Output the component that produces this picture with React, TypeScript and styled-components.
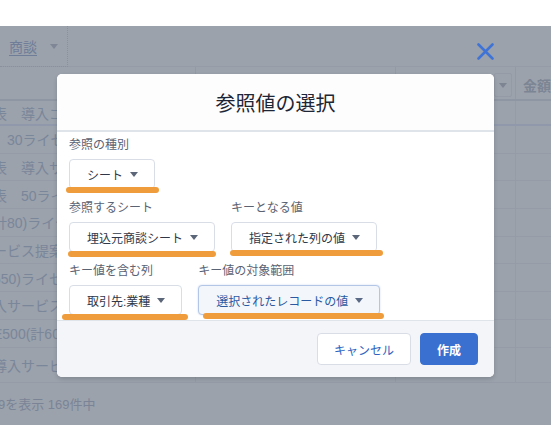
import styled, { createGlobalStyle } from "styled-components";

const GlobalStyle = createGlobalStyle`
  html, body {
    margin: 0;
    padding: 0;
    background: #ffffff;
  }
  body {
    font-family: "Liberation Sans", "Noto Sans CJK JP", sans-serif;
  }
`;

const rows = [
  "表　導入コンサルティング",
  "　30ライセンス",
  "表　導入サービス",
  "表　50ライセンス",
  "計80)ライセンス",
  "ービス提案",
  "550)ライセンス",
  "入サービス",
  "E500(計60)",
  "導入サービス",
];

const fields = [
  [{ label: "参照の種別", value: "シート", mark: { l: -3, r: -4, b: -4 } }],
  [
    { label: "参照するシート", value: "埋込元商談シート", mark: { l: -1, r: -1, b: -5 } },
    { label: "キーとなる値", value: "指定された列の値", mark: { l: -1, r: -6, b: -4 } },
  ],
  [
    { label: "キー値を含む列", value: "取引先:業種", mark: { l: -7, r: -6, b: -5 } },
    {
      label: "キー値の対象範囲",
      value: "選択されたレコードの値",
      focused: true,
      mark: { l: 5, r: -4, b: -4 },
    },
  ],
];

const App = () => {
  return (
    <>
      <GlobalStyle />
      <Page>
        <TopStrip />
        <Screen>
          <Toolbar>
            <TabItem>
              <TabLink>商談</TabLink>
              <Caret $color="#7f8796" />
            </TabItem>
          </Toolbar>
          <HeaderRow>
            <HeadCell $w={196} />
            <HeadCell $w={200} />
            <HeadCell $w={120}>
              <SortBox>
                <Caret $color="#7d8593" />
              </SortBox>
            </HeadCell>
            <HeadCell $w={60}>
              <HeadText>金額</HeadText>
            </HeadCell>
          </HeaderRow>
          <TableBody>
            {rows.map((text, i) => (
              <BodyRow key={i} $first={i === 0} $last={i === rows.length - 1}>
                <BodyCell $w={196}>
                  <RowText>{text}</RowText>
                </BodyCell>
                <BodyCell $w={200} />
                <BodyCell $w={120} />
                <BodyCell $w={60} />
              </BodyRow>
            ))}
          </TableBody>
          <TableFooter>
            <FooterText>9を表示 169件中</FooterText>
          </TableFooter>

          <Overlay>
            <CloseButton aria-label="閉じる">
              <svg width="17" height="17" viewBox="0 0 17 17">
                <path
                  d="M1.5 1.5 L15.5 15.5 M15.5 1.5 L1.5 15.5"
                  stroke="#3f74d6"
                  strokeWidth="2.6"
                  strokeLinecap="round"
                  fill="none"
                />
              </svg>
            </CloseButton>
            <Modal>
              <ModalHeader>
                <Title>参照値の選択</Title>
              </ModalHeader>
              <ModalBody>
                {fields.map((row, i) => (
                  <FieldRow key={i}>
                    {row.map((f) => (
                      <Field key={f.label}>
                        <Label>{f.label}</Label>
                        <SelectWrap>
                          <Select $focused={f.focused}>
                            {f.value}
                            <Caret $color={f.focused ? "#5a6a86" : "#5c6679"} />
                          </Select>
                          <Mark $l={f.mark.l} $r={f.mark.r} $b={f.mark.b} />
                        </SelectWrap>
                      </Field>
                    ))}
                  </FieldRow>
                ))}
              </ModalBody>
              <ModalFooter>
                <CancelButton>キャンセル</CancelButton>
                <PrimaryButton>作成</PrimaryButton>
              </ModalFooter>
            </Modal>
          </Overlay>
        </Screen>
        <BottomStrip />
      </Page>
    </>
  );
};

export default App;

const Page = styled.div`
  width: 551px;
  height: 437px;
  display: flex;
  flex-direction: column;
  overflow: hidden;
`;

const TopStrip = styled.div`
  height: 26px;
  flex: 0 0 26px;
  background: #ffffff;
`;

const BottomStrip = styled.div`
  height: 12px;
  flex: 0 0 12px;
  background: #ffffff;
`;

const Screen = styled.div`
  position: relative;
  flex: 0 0 399px;
  height: 399px;
  background: #9ba2ac;
  display: flex;
  flex-direction: column;
  overflow: hidden;
`;

const Toolbar = styled.div`
  height: 41px;
  flex: 0 0 41px;
  box-sizing: border-box;
  display: flex;
  border-bottom: 1px solid #959ca7;
`;

const TabItem = styled.div`
  width: 68px;
  display: flex;
  align-items: center;
  gap: 13px;
  padding-left: 9px;
  box-sizing: border-box;
  border-right: 1px dotted #8a919c;
  border-bottom: 1px dotted #8a919c;
  margin-bottom: -1px;
`;

const TabLink = styled.span`
  font-size: 14px;
  color: #707d98;
  text-decoration: underline;
  text-underline-offset: 3px;
`;

const Caret = styled.span<{ $color: string }>`
  display: inline-block;
  width: 0;
  height: 0;
  border-left: 4px solid transparent;
  border-right: 4px solid transparent;
  border-top: 5px solid ${(p) => p.$color};
`;

const HeaderRow = styled.div`
  height: 34px;
  flex: 0 0 34px;
  box-sizing: border-box;
  display: flex;
  border-bottom: 2px solid #8e96a3;
`;

const HeadCell = styled.div<{ $w: number }>`
  flex: 0 0 ${(p) => p.$w}px;
  display: flex;
  align-items: center;
  justify-content: flex-end;
  border-right: 1px solid #939aa5;
  box-sizing: border-box;
  padding: 4px 3px 0 0;
  &:last-child {
    justify-content: flex-start;
    padding-left: 7px;
    border-right: none;
  }
`;

const SortBox = styled.div`
  width: 18px;
  height: 24px;
  display: flex;
  align-items: center;
  justify-content: center;
  border: 1px solid #949ba6;
  border-radius: 2px;
  box-sizing: border-box;
`;

const HeadText = styled.span`
  font-size: 14px;
  font-weight: bold;
  color: #7c8594;
`;

const TableBody = styled.div`
  display: flex;
  flex-direction: column;
`;

const BodyRow = styled.div<{ $first?: boolean; $last?: boolean }>`
  display: flex;
  box-sizing: border-box;
  flex: 0 0 ${(p) => (p.$first ? "25px" : p.$last ? "35px" : "27.7px")};
  border-bottom: ${(p) => (p.$first ? "2px solid #8f99ab" : "1px solid #959ca7")};
`;

const BodyCell = styled.div<{ $w: number }>`
  flex: 0 0 ${(p) => p.$w}px;
  display: flex;
  align-items: center;
  overflow: hidden;
  border-right: 1px solid #959ca7;
  box-sizing: border-box;
  &:last-child {
    border-right: none;
  }
`;

const RowText = styled.span`
  margin-left: -7px;
  font-size: 14px;
  white-space: nowrap;
  color: #7a869a;
`;

const TableFooter = styled.div`
  flex: 1;
  display: flex;
  align-items: center;
`;

const FooterText = styled.span`
  margin-left: -2px;
  font-size: 13px;
  color: #7a8496;
`;

const Overlay = styled.div`
  position: absolute;
  inset: 0;
  display: flex;
  justify-content: center;
  align-items: flex-start;
  padding-top: 48px;
`;

const CloseButton = styled.button`
  position: absolute;
  top: 17px;
  left: 477px;
  width: 17px;
  height: 17px;
  padding: 0;
  border: none;
  background: none;
  display: flex;
`;

const Modal = styled.div`
  width: 437px;
  background: #ffffff;
  border-radius: 5px;
  box-shadow: 0 2px 4px rgba(0, 0, 0, 0.16);
  overflow: hidden;
  display: flex;
  flex-direction: column;
`;

const ModalHeader = styled.div`
  height: 56px;
  display: flex;
  align-items: center;
  justify-content: center;
  border-bottom: 2px solid #dfe3ea;
  background: #fdfdfe;
`;

const Title = styled.h2`
  margin: 0;
  font-size: 20px;
  font-weight: normal;
  color: #1e2635;
  padding-top: 1px;
`;

const ModalBody = styled.div`
  display: flex;
  flex-direction: column;
  gap: 10px;
  padding: 4px 12px 5px 12px;
`;

const FieldRow = styled.div`
  display: flex;
  gap: 16px;
`;

const Field = styled.div`
  display: flex;
  flex-direction: column;
  align-items: flex-start;
  gap: 5px;
`;

const Label = styled.span`
  font-size: 12px;
  line-height: 18px;
  color: #5a6374;
`;

const SelectWrap = styled.div`
  position: relative;
`;

const Select = styled.div<{ $focused?: boolean }>`
  height: 30px;
  box-sizing: border-box;
  display: inline-flex;
  align-items: center;
  gap: 7px;
  padding: 0 16px 0 17px;
  font-size: 12px;
  white-space: nowrap;
  border-radius: 4px;
  border: 1px solid ${(p) => (p.$focused ? "#b3c6e6" : "#d8dde6")};
  background: ${(p) => (p.$focused ? "#f3f6fb" : "#ffffff")};
  color: ${(p) => (p.$focused ? "#2a5aa2" : "#2f3849")};
  box-shadow: ${(p) => (p.$focused ? "0 0 2px #c9d7ef" : "none")};
`;

const Mark = styled.div<{ $l: number; $r: number; $b: number }>`
  position: absolute;
  left: ${(p) => p.$l}px;
  right: ${(p) => p.$r}px;
  bottom: ${(p) => p.$b}px;
  height: 6px;
  border-radius: 3px;
  background: #ef9d3c;
  z-index: 2;
`;

const ModalFooter = styled.div`
  display: flex;
  justify-content: flex-end;
  gap: 9px;
  padding: 12px 16px;
  border-top: 1px solid #dfe3ea;
  background: #f4f5f9;
`;

const BaseButton = styled.button`
  height: 32px;
  padding: 0 16px;
  border-radius: 4px;
  font-family: inherit;
  font-size: 12px;
  box-sizing: border-box;
`;

const CancelButton = styled(BaseButton)`
  border: 1px solid #d8dde6;
  background: #ffffff;
  color: #2e64c1;
`;

const PrimaryButton = styled(BaseButton)`
  border: 1px solid #3a70cf;
  background: #3a70cf;
  color: #ffffff;
  font-weight: 600;
`;
